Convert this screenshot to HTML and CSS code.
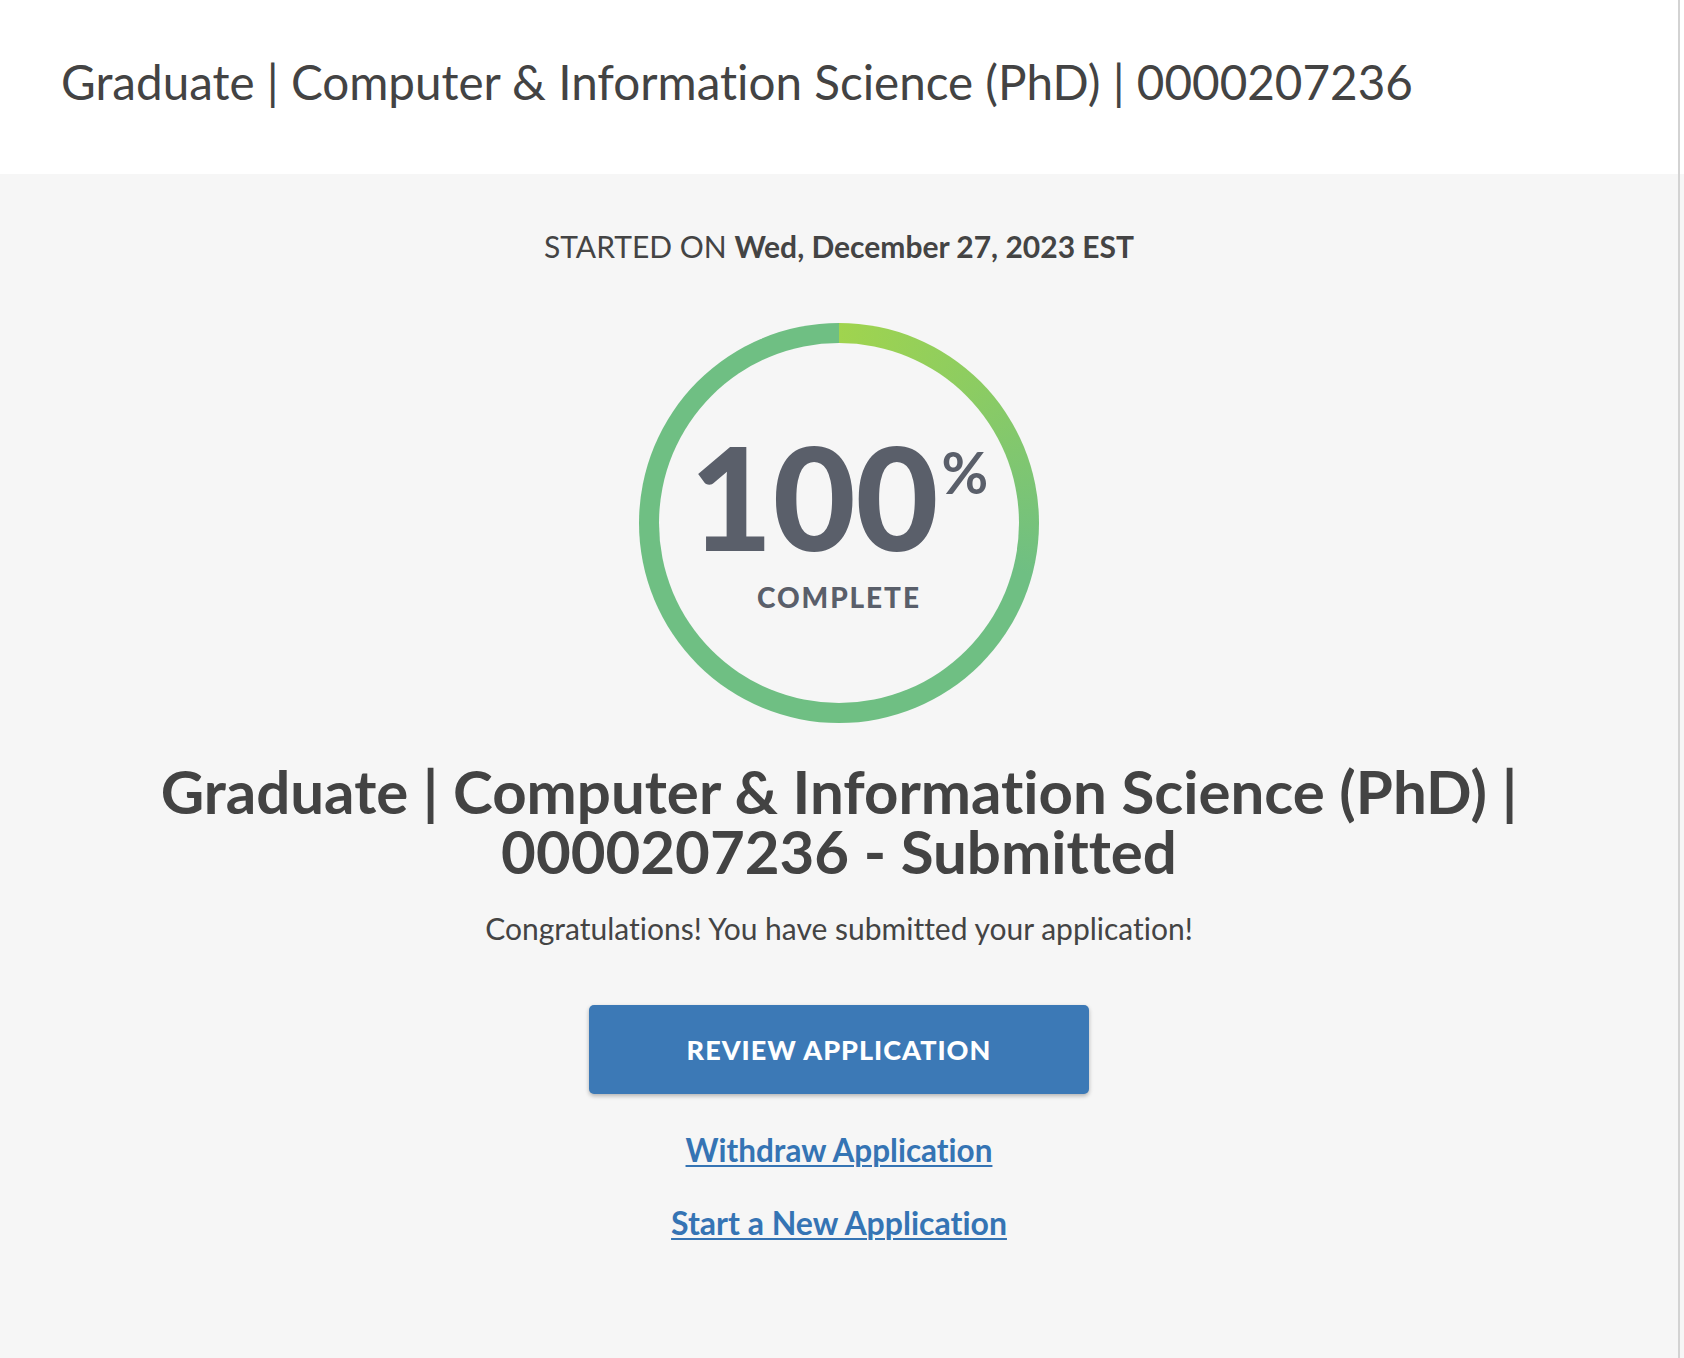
FILE: index.html
```html
<!DOCTYPE html>
<html lang="en">
<head>
<meta charset="utf-8">
<title>Application Status</title>
<link rel="stylesheet" href="styles.css">
</head>
<body>
<div class="page">
  <header class="top">
    <h1 class="top-title">Graduate | Computer &amp; Information Science (PhD) | 0000207236</h1>
  </header>
  <main class="main">
    <p class="started">STARTED ON <strong>Wed, December 27, 2023 EST</strong></p>
    <div class="ring">
      <div class="ring-inner">
        <div class="pct-line"><span class="pct-num">100</span><span class="pct-sign">%</span></div>
        <div class="pct-label">COMPLETE</div>
      </div>
    </div>
    <h2 class="headline">Graduate | Computer &amp; Information Science (PhD) | 0000207236 - Submitted</h2>
    <p class="congrats">Congratulations! You have submitted your application!</p>
    <button class="btn-review" type="button">REVIEW APPLICATION</button>
    <a class="link" href="#">Withdraw Application</a>
    <a class="link link-second" href="#">Start a New Application</a>
  </main>
</div>
</body>
</html>
```

FILE: styles.css
```css
html, body {
  margin: 0;
  padding: 0;
}

body {
  font-family: "Lato", "Liberation Sans", sans-serif;
  font-variant-ligatures: none;
  color: #444444;
  background: #f6f6f6;
}

.page {
  position: relative;
  min-height: 1358px;
  display: flex;
  flex-direction: column;
}

.page::after {
  content: "";
  position: absolute;
  top: 0;
  bottom: 0;
  right: 4px;
  width: 2px;
  background: #d3d3d3;
}

.top {
  background: #ffffff;
  height: 174px;
  box-sizing: border-box;
  display: flex;
  align-items: center;
  padding: 0 0 11px 61px;
}

.top-title {
  margin: 0;
  font-size: 47.6px;
  font-weight: 400;
  line-height: 56px;
  color: #434343;
}

.main {
  flex: 1;
  background: #f6f6f6;
  display: flex;
  flex-direction: column;
  align-items: center;
  padding: 55px 6px 40px 0;
}

.started {
  margin: 0;
  font-size: 30px;
  line-height: 34px;
  color: #444444;
}

.started strong {
  font-weight: 700;
}

.ring {
  margin-top: 60px;
  width: 400px;
  height: 400px;
  box-sizing: border-box;
  border-radius: 50%;
  padding: 20px;
  background: conic-gradient(from 0deg, #a0d44e 0deg, #8ccc62 45deg, #6fbf83 105deg, #6fbf83 360deg);
}

.ring-inner {
  width: 100%;
  height: 100%;
  border-radius: 50%;
  background: #f6f6f6;
  display: flex;
  flex-direction: column;
  align-items: center;
  padding-top: 82px;
  box-sizing: border-box;
}

.pct-line {
  line-height: 141px;
  height: 141px;
  white-space: nowrap;
  color: #5a5f6a;
}

.pct-num {
  font-size: 143px;
  font-weight: 900;
  letter-spacing: 0;
  line-height: 141px;
}

.pct-sign {
  display: inline-block;
  vertical-align: top;
  font-size: 57px;
  line-height: 57px;
  font-weight: 700;
  padding-top: 19px;
  margin-left: 3px;
}

.pct-label {
  margin-top: 17px;
  font-size: 28px;
  line-height: 28px;
  font-weight: 900;
  color: #5a5f6a;
  letter-spacing: 1.9px;
}

.headline {
  margin: 38px 0 0;
  max-width: 1480px;
  text-align: center;
  font-size: 60px;
  line-height: 60px;
  font-weight: 700;
  color: #434343;
}

.congrats {
  margin: 31px 0 0;
  font-size: 30px;
  line-height: 32px;
  color: #444444;
}

.btn-review {
  margin-top: 61px;
  width: 500px;
  height: 89px;
  border: none;
  border-radius: 5px;
  background: #3c79b6;
  color: #ffffff;
  font-family: inherit;
  font-size: 27px;
  font-weight: 900;
  letter-spacing: 1px;
  box-shadow: 0 2px 4px rgba(0, 0, 0, 0.28);
  cursor: pointer;
}

.link {
  margin-top: 39px;
  font-size: 31.5px;
  line-height: 34px;
  font-weight: 700;
  color: #3574b4;
  text-decoration: underline;
  text-underline-offset: 3px;
  text-decoration-thickness: 2px;
}

.link-second {
  margin-top: 39px;
  font-size: 32px;
}
```
